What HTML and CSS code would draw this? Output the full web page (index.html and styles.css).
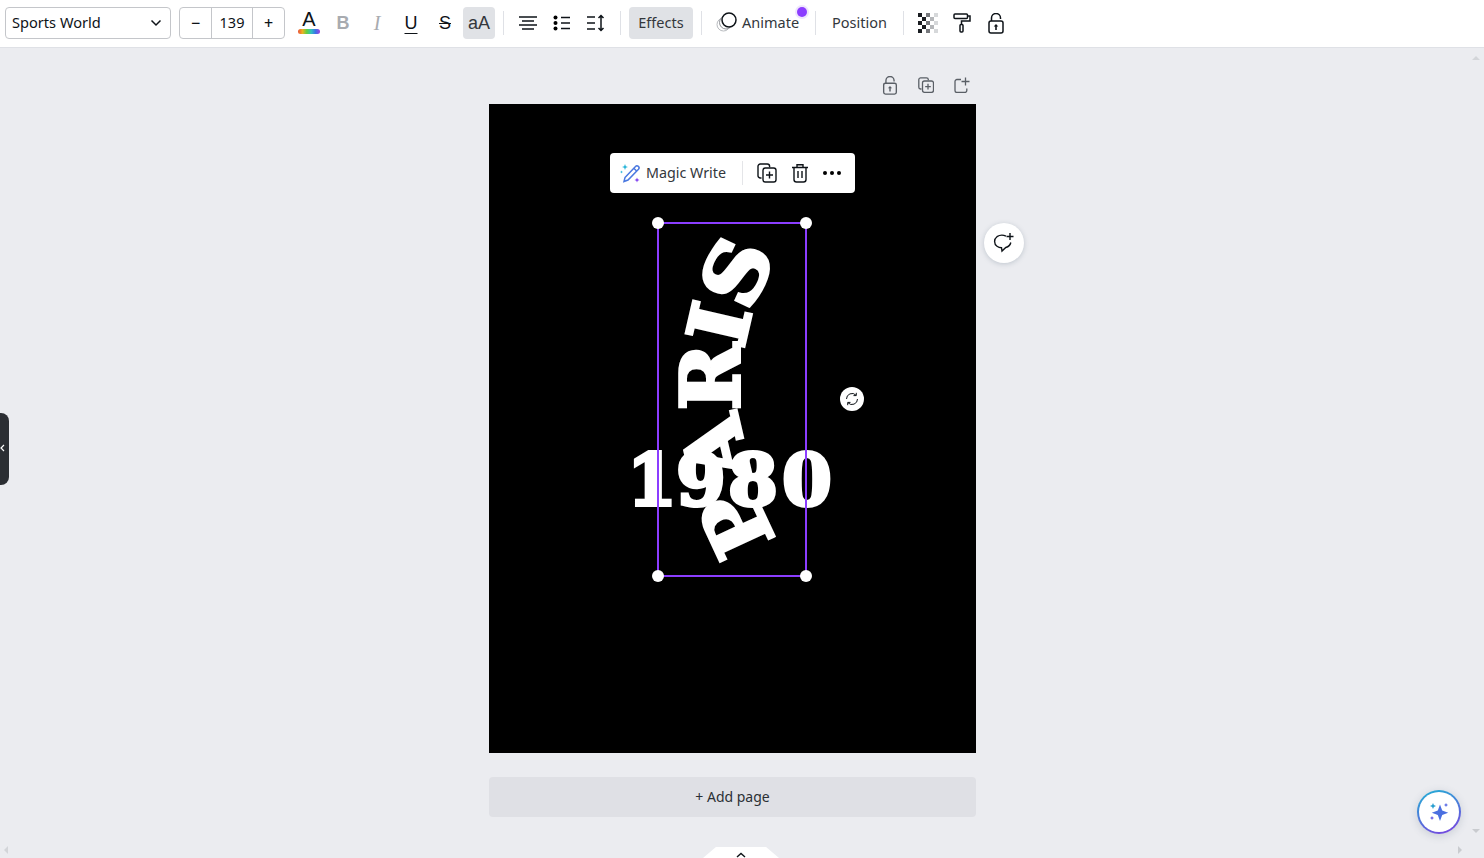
FILE: index.html
```html
<!DOCTYPE html>
<html>
<head>
	<meta charset="utf-8">
	<title>Design editor</title>
	<link rel="stylesheet" href="styles.css">
</head>
<body>
	<div class="toolbar">
		<div class="font-select"><span>Sports World</span>
			<svg width="12" height="8" viewBox="0 0 12 8"><path d="M1.500 1.500 6 6l4.500-4.500" fill="none" stroke="#0e1318" stroke-width="1.500"/></svg>
		</div>
		<div class="stepper">
			<div class="step">&minus;</div>
			<div class="step-value">139</div>
			<div class="step">+</div>
		</div>
		<div class="tool-group first">
			<div class="tool color-a"><span class="a-letter">A</span><span class="rainbow"></span></div>
			<div class="tool bold muted">B</div>
			<div class="tool italic muted">I</div>
			<div class="tool underline">U</div>
			<div class="tool strike">S</div>
			<div class="tool case active">aA</div>
		</div>
		<div class="sep"></div>
		<div class="tool-group">
			<div class="tool"><svg width="20" height="16" viewBox="0 0 20 16"><path d="M1 2h18M4 6h12M1 10h18M4 14h12" stroke="#0e1318" stroke-width="1.500"/></svg></div>
			<div class="tool"><svg width="18" height="16" viewBox="0 0 18 16"><circle cx="2.500" cy="2.500" r="2"/><circle cx="2.500" cy="8" r="2"/><circle cx="2.500" cy="13.500" r="2"/><path d="M8 2.500h9M8 8h9M8 13.500h9" stroke="#0e1318" stroke-width="1.500"/></svg></div>
			<div class="tool"><svg width="20" height="18" viewBox="0 0 20 18"><path d="M1 3h8M1 9h8M1 15h8" stroke="#0e1318" stroke-width="1.500"/><path d="M15 1.500v15M12.500 4 15 1.500 17.500 4M12.500 14l2.500 2.500 2.500-2.500" fill="none" stroke="#0e1318" stroke-width="1.500"/></svg></div>
		</div>
		<div class="sep"></div>
		<div class="text-btn active effects">Effects</div>
		<div class="sep"></div>
		<div class="text-btn animate">
			<svg width="22" height="22" viewBox="0 0 22 22"><circle cx="7.500" cy="13.500" r="6.500" fill="none" stroke="#b9bcc0"/><circle cx="10" cy="11.500" r="6.500" fill="#fff" stroke="#8f9297"/><circle cx="13" cy="9" r="7" fill="#fff" stroke="#0e1318" stroke-width="1.500"/></svg>
			<span>Animate</span>
			<i class="dot"></i>
		</div>
		<div class="sep"></div>
		<div class="text-btn position">Position</div>
		<div class="sep"></div>
		<div class="tool-group">
			<div class="tool"><svg width="20" height="20" viewBox="0 0 20 20"><path d="M0 0h4v4H0zM0 8h4v4H0zM0 16h4v4H0zM4 4h4v4H4zM4 12h4v4H4z" fill="#1a1d21"/><path d="M8 0h4v4H8zM8 8h4v4H8zM8 16h4v4H8z" fill="#77797d"/><path d="M12 4h4v4h-4zM12 12h4v4h-4z" fill="#b4b6b9"/><path d="M16 0h4v4h-4zM16 8h4v4h-4zM16 16h4v4h-4z" fill="#d6d8da"/></svg></div>
			<div class="tool"><svg width="18" height="20" viewBox="0 0 18 20"><g fill="none" stroke="#0e1318" stroke-width="1.500"><rect x="1" y="1" width="13.500" height="4.500" rx="1"/><path d="M14.500 3H17v5H8.500v3.500"/><rect x="7" y="11.500" width="3" height="7.500" rx="1"/></g></svg></div>
			<div class="tool"><svg width="16" height="21" viewBox="0 0 16 21"><g fill="none" stroke="#0e1318" stroke-width="1.500"><rect x="1" y="8" width="14" height="12" rx="2"/><path d="M3.500 8V5a4.500 4.500 0 0 1 9 0v1"/></g><path d="M8 11l2.300 2.500H8.800V17H7.200v-3.500H5.700z" fill="#0e1318"/></svg></div>
		</div>
	</div>

	<div class="workspace">
		<div class="page-actions">
			<svg width="16" height="19" viewBox="0 0 16 21"><g fill="none" stroke="#5a5f66" stroke-width="1.500"><rect x="1" y="8" width="14" height="12" rx="2"/><path d="M3.500 8V5a4.500 4.500 0 0 1 9 0v1"/></g><path d="M8 11l2.300 2.500H8.800V17H7.200v-3.500H5.700z" fill="#5a5f66"/></svg>
			<svg width="16" height="16" viewBox="0 0 16 16"><g fill="none" stroke="#5a5f66" stroke-width="1.300"><path d="M3.500 12H2.500A1.800 1.800 0 0 1 .8 10.200V2.500A1.800 1.800 0 0 1 2.500.8h6A1.800 1.800 0 0 1 10.300 2.500v.8"/><rect x="4.500" y="4" width="11" height="11.300" rx="2"/><path d="M10 6.800v5.600M7.200 9.600h5.600"/></g></svg>
			<svg width="16" height="16" viewBox="0 0 16 16"><g fill="none" stroke="#5a5f66" stroke-width="1.300"><path d="M7 2.500H3A2 2 0 0 0 1 4.500v9a2 2 0 0 0 2 2h8a2 2 0 0 0 1.800-2v-2"/><path d="M11.500 .5v8M7.500 4.500h8"/></g></svg>
		</div>

		<div class="canvas">
			<div class="letters">
				<span class="num n1">1</span><span class="num n2">9</span><span class="num n3">8</span><span class="num n4">0</span>
				<span class="arc l-p">P</span><span class="arc l-a">A</span><span class="arc l-r">R</span><span class="arc l-i">I</span><span class="arc l-s">S</span>
			</div>

			<div class="selection">
				<i class="grip tl"></i><i class="grip tr"></i><i class="grip bl"></i><i class="grip br"></i>
			</div>

			<div class="rotate">
				<svg width="14" height="14" viewBox="0 0 14 14"><g fill="none" stroke="#0e1318" stroke-width="1"><path d="M1.500 7A5.500 5.500 0 0 1 11 3.200"/><path d="M12.500 7A5.500 5.500 0 0 1 3 10.800"/><path d="M11.300 .8v2.800H8.500M2.700 13.200v-2.800h2.800"/></g></svg>
			</div>

			<div class="context-bar">
				<div class="magic">
					<svg width="22" height="22" viewBox="0 0 22 22"><g fill="none" stroke="#4a78e0" stroke-width="1.500"><path d="M5 15.500 15.500 4.500a2 2 0 0 1 3 2.700L8 18l-4 1.500z"/><path d="M13.800 6.300l2.800 2.700"/></g><path d="M5 2l.8 2.200L8 5l-2.200.8L5 8l-.8-2.200L2 5l2.200-.8z" fill="#22b3d8"/><path d="M1.500 8.500l.4 1.100 1.100.4-1.100.4-.4 1.100-.4-1.100L0 10l1.100-.4z" fill="#22b3d8"/><path d="M17 15.500l.7 1.800 1.800.7-1.800.7-.7 1.800-.7-1.800-1.800-.7 1.800-.7z" fill="#7d3cf0"/></svg>
					<span>Magic Write</span>
				</div>
				<div class="bar-sep"></div>
				<div class="bar-icon"><svg width="20" height="20" viewBox="0 0 20 20"><g fill="none" stroke="#0e1318" stroke-width="1.400"><path d="M4.500 15H3.300A2.300 2.300 0 0 1 1 12.700V3.300A2.300 2.300 0 0 1 3.300 1h7A2.300 2.300 0 0 1 12.600 3.300v1"/><rect x="6" y="5" width="13" height="14" rx="2.300"/><path d="M12.500 8.500v7M9 12h7"/></g></svg></div>
				<div class="bar-icon"><svg width="18" height="20" viewBox="0 0 18 20"><g fill="none" stroke="#0e1318" stroke-width="1.400"><path d="M1 4.500h16M6 4.500V1.800h6v2.700"/><path d="M3 4.500V16.500A2.500 2.500 0 0 0 5.500 19h7a2.500 2.500 0 0 0 2.500-2.500V4.500"/><path d="M7 8v7M11 8v7"/></g></svg></div>
				<div class="bar-icon"><svg width="18" height="4" viewBox="0 0 18 4"><circle cx="2" cy="2" r="2"/><circle cx="9" cy="2" r="2"/><circle cx="16" cy="2" r="2"/></svg></div>
			</div>
		</div>

		<div class="add-page">+ Add page</div>
	</div>

	<div class="side-handle"><svg width="6" height="8" viewBox="0 0 6 8"><path d="M5 1 2 4l3 3" fill="none" stroke="#fff" stroke-width="1.200"/></svg></div>

	<div class="comment-btn">
		<svg width="22" height="22" viewBox="0 0 22 22"><g fill="none" stroke="#0e1318" stroke-width="1.400"><path d="M13 4.200A8 7 0 0 0 4 4.700C.8 7 .8 12 4 14.300c1.400 1 3 1.400 4.500 1.400L9 19l3.800-3.500c2-.5 4.400-2 5-5"/><path d="M17 1v7M13.500 4.500h7"/></g></svg>
	</div>

	<div class="assist-btn">
		<svg width="24" height="24" viewBox="0 0 24 24"><path d="M13 4.500l2.200 6 6 2.200-6 2.200-2.200 6-2.200-6-6-2.200 6-2.200z" fill="#4a6fe0"/><path d="M6 3l.9 2.100L9 6l-2.100.9L6 9l-.9-2.100L3 6l2.100-.9z" fill="#2a9fd0"/><path d="M19 3l.7 1.300L21 5l-1.300.7L19 7l-.7-1.300L17 5l1.300-.7z" fill="#5f6fe6"/><path d="M5 16l.7 1.300L7 18l-1.300.7L5 20l-.7-1.300L3 18l1.300-.7z" fill="#6a5fe6"/></svg>
	</div>

	<div class="pull-tab"><svg width="10" height="6" viewBox="0 0 10 6"><path d="M1 5 5 1.500 9 5" fill="none" stroke="#0e1318" stroke-width="1.400"/></svg></div>

	<i class="arrow up"></i><i class="arrow down"></i><i class="arrow left"></i><i class="arrow right"></i>
</body>
</html>
```
FILE: styles.css
```css
* {
	box-sizing: border-box;
}
html, body {
	margin: 0;
	height: 100%;
	overflow: hidden;
}
body {
	background: #ebecf0;
	font-family: "Noto Sans", "Open Sans", sans-serif;
	color: #0e1318;
	font-size: 14px;
}

/* top bar */
.toolbar {
	display: flex;
	align-items: center;
	height: 48px;
	padding: 0 0 1px 5px;
	background: #fff;
	border-bottom: 1px solid #dfe1e6;
}
.font-select {
	display: flex;
	align-items: center;
	justify-content: space-between;
	width: 166px;
	height: 32px;
	padding: 0 8px 0 6px;
	border: 1px solid #c4c6ca;
	border-radius: 4px;
	font-size: 14.600px;
}
.font-select span {
	margin-bottom: 2px;
}
.stepper {
	display: flex;
	width: 106px;
	height: 32px;
	margin-left: 8px;
	border: 1px solid #c4c6ca;
	border-radius: 4px;
}
.step {
	display: flex;
	align-items: center;
	justify-content: center;
	width: 31px;
	font-size: 16px;
	font-weight: 500;
}
.step-value {
	display: flex;
	align-items: center;
	justify-content: center;
	flex: 1;
	padding-bottom: 2px;
	border-left: 1px solid #c4c6ca;
	border-right: 1px solid #c4c6ca;
	font-size: 14.500px;
}
.tool-group {
	display: flex;
	gap: 2px;
}
.tool-group.first {
	margin-left: 8px;
}
.tool {
	display: flex;
	align-items: center;
	justify-content: center;
	width: 32px;
	height: 32px;
	border-radius: 4px;
	font-size: 18px;
	font-family: "Liberation Sans", sans-serif;
}
.tool.active, .text-btn.active {
	background: #e0e2e6;
}
.muted {
	color: #a8abb0;
}
.bold {
	font-weight: 700;
}
.italic {
	font-style: italic;
	font-family: "Liberation Serif", serif;
	font-size: 20px;
}
.underline {
	text-decoration: underline;
	text-decoration-thickness: 1px;
	text-underline-offset: 4px;
}
.strike {
	text-decoration: line-through;
	text-decoration-thickness: 1px;
}
.case {
	font-size: 18px;
	color: #33373c;
}
.color-a {
	flex-direction: column;
}
.a-letter {
	font-size: 20px;
	line-height: 18px;
	margin-top: -2px;
}
.rainbow {
	width: 22px;
	height: 5px;
	margin-top: 1px;
	border-radius: 3px;
	background: linear-gradient(90deg, #e8503a, #f0b020, #5fd040, #30c0c0, #3c70e8, #a040e0);
}
.sep {
	width: 1px;
	height: 24px;
	margin: 0 8px;
	background: #dfe1e6;
}
.text-btn {
	display: flex;
	align-items: center;
	height: 32px;
	padding-bottom: 2px;
	border-radius: 4px;
	font-size: 14.500px;
	color: #33373c;
}
.effects {
	justify-content: center;
	width: 64px;
}
.animate {
	position: relative;
	gap: 4px;
	width: 97px;
	padding-left: 6px;
}
.dot {
	position: absolute;
	right: 0;
	top: 0;
	width: 10px;
	height: 10px;
	border-radius: 50%;
	background: #8b3dff;
	box-shadow: 0 0 0 2px #efe6fd;
}
.position {
	justify-content: center;
	width: 71px;
}

/* design area */
.workspace {
	display: flex;
	flex-direction: column;
	width: 487px;
	margin-left: 489px;
}
.page-actions {
	display: flex;
	align-items: center;
	justify-content: flex-end;
	gap: 20px;
	height: 56px;
	padding: 18px 6px 0 0;
}
.canvas {
	position: relative;
	height: 649px;
	background: #000;
}
.add-page {
	display: flex;
	align-items: center;
	justify-content: center;
	height: 40px;
	margin-top: 24px;
	padding-bottom: 2px;
	border-radius: 4px;
	background: #dfe0e5;
	font-size: 14px;
	color: #2c3035;
}

/* type on the canvas, coords relative to the page */
.letters {
	position: absolute;
	inset: 0;
	overflow: hidden;
	font-family: "DejaVu Serif", serif;
	font-weight: 700;
	color: #fff;
}
.num, .arc {
	position: absolute;
	width: 60px;
	height: 80px;
	line-height: 80px;
	text-align: center;
	-webkit-text-stroke: 4px #fff;
}
.num {
	font-size: 71px;
	top: 336px;
}
.n1 { left: 133px; }
.n2 { left: 182px; }
.n3 { left: 234px; }
.n4 { left: 288px; }
.arc {
	font-size: 80px;
}
.l-p { left: 218px; top: 380px; transform: rotate(-115deg); }
.l-a { left: 197px; top: 305px; transform: rotate(-103deg); }
.l-r { left: 192px; top: 236px; transform: rotate(-90deg); }
.l-i { left: 201px; top: 180px; transform: rotate(-77deg) scaleX(1.050); }
.l-s { left: 218px; top: 128px; transform: rotate(-65deg) scaleX(1.100); }

.selection {
	position: absolute;
	left: 168px;
	top: 118px;
	width: 150px;
	height: 355px;
	border: 2px solid #8b3dff;
}
.grip {
	position: absolute;
	width: 12px;
	height: 12px;
	border-radius: 50%;
	background: #fff;
}
.tl { left: -7px; top: -7px; }
.tr { right: -7px; top: -7px; }
.bl { left: -7px; bottom: -7px; }
.br { right: -7px; bottom: -7px; }
.rotate {
	position: absolute;
	left: 351px;
	top: 283px;
	display: flex;
	align-items: center;
	justify-content: center;
	width: 24px;
	height: 24px;
	border-radius: 50%;
	background: #fff;
}
.context-bar {
	position: absolute;
	left: 121px;
	top: 49px;
	display: flex;
	align-items: center;
	width: 245px;
	height: 40px;
	padding-left: 10px;
	border-radius: 4px;
	background: #fff;
}
.magic {
	display: flex;
	align-items: center;
	gap: 4px;
	font-size: 14.300px;
	white-space: nowrap;
	color: #33373c;
}
.magic span {
	margin-bottom: 2px;
}
.bar-sep {
	width: 1px;
	height: 24px;
	margin: 0 14px 0 16px;
	background: #e4e5e8;
}
.bar-icon {
	display: flex;
	align-items: center;
	justify-content: center;
	width: 20px;
	margin-right: 14px;
}

/* floating stuff */
.side-handle {
	position: absolute;
	left: 0;
	top: 413px;
	display: flex;
	align-items: center;
	width: 9px;
	height: 72px;
	padding-bottom: 2px;
	border-radius: 0 8px 8px 0;
	background: #2b2e33;
}
.side-handle svg {
	margin-left: -1px;
}
.comment-btn {
	position: absolute;
	left: 984px;
	top: 223px;
	display: flex;
	align-items: center;
	justify-content: center;
	width: 40px;
	height: 40px;
	border-radius: 50%;
	background: #fff;
	box-shadow: 0 1px 5px rgba(64,87,109,.25);
}
.assist-btn {
	position: absolute;
	left: 1417px;
	top: 790px;
	display: flex;
	align-items: center;
	justify-content: center;
	width: 44px;
	height: 44px;
	border: 2px solid transparent;
	border-radius: 50%;
	background: linear-gradient(#fff, #fff) padding-box, linear-gradient(160deg, #1fb2d4, #7d3fe0) border-box;
	box-shadow: 0 2px 8px rgba(64,87,109,.2);
}
.pull-tab {
	position: absolute;
	left: 703px;
	top: 847px;
	display: flex;
	justify-content: center;
	width: 76px;
	height: 11px;
	padding-top: 5px;
	background: #fff;
	clip-path: polygon(0 100%, 17% 0, 83% 0, 100% 100%);
}
.arrow {
	position: absolute;
	width: 0;
	height: 0;
	border: 4px solid transparent;
}
.arrow.up { left: 1472px; top: 52px; border-bottom-color: #d3d5d9; }
.arrow.down { left: 1472px; top: 829px; border-top-color: #c9cbcf; }
.arrow.left { left: 0; top: 846px; border-right-color: #d3d5d9; }
.arrow.right { left: 1458px; top: 846px; border-left-color: #c9cbcf; }
```
